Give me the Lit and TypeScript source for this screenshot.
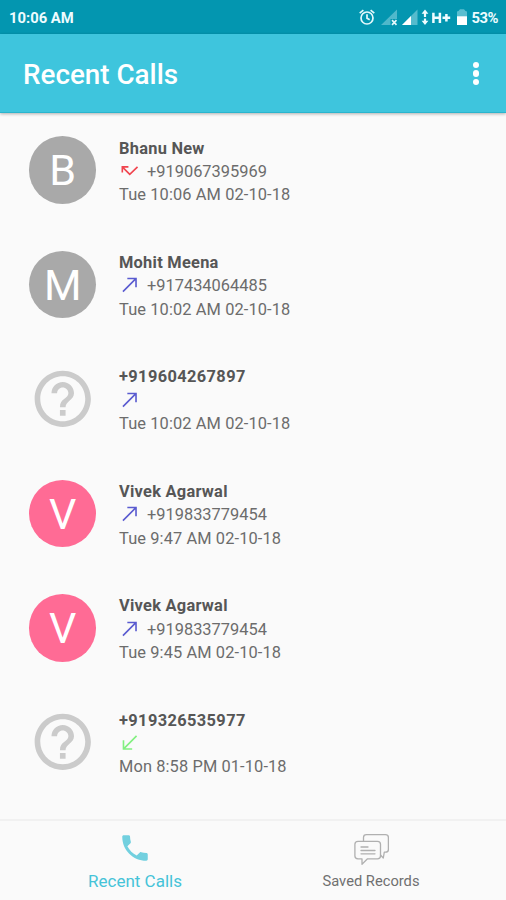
import { LitElement, html, svg, css } from "lit";
import { customElement, property } from "lit/decorators.js";

type Kind = "missed" | "out" | "in";
interface Call {
  initial?: string;
  tone?: string;
  name: string;
  number?: string;
  kind: Kind;
  time: string;
}

const CALLS: Call[] = [
  { initial: "B", tone: "grey", name: "Bhanu New", number: "+919067395969", kind: "missed", time: "Tue 10:06 AM 02-10-18" },
  { initial: "M", tone: "grey", name: "Mohit Meena", number: "+917434064485", kind: "out", time: "Tue 10:02 AM 02-10-18" },
  { name: "+919604267897", kind: "out", time: "Tue 10:02 AM 02-10-18" },
  { initial: "V", tone: "pink", name: "Vivek Agarwal", number: "+919833779454", kind: "out", time: "Tue 9:47 AM 02-10-18" },
  { initial: "V", tone: "pink", name: "Vivek Agarwal", number: "+919833779454", kind: "out", time: "Tue 9:45 AM 02-10-18" },
  { name: "+919326535977", kind: "in", time: "Mon 8:58 PM 01-10-18" },
];

const ARROWS = {
  missed: svg`<path d="M20.7 7.7 12 16 4.2 8.2M3.7 14V7.7H10.5" />`,
  out: svg`<path d="M4.4 19.6 18.8 5.2M9.3 5H19V14.7" />`,
  in: svg`<path d="M19.6 4.4 5.2 18.8M14.7 19H5V9.3" />`,
};

@customElement("status-bar")
class StatusBar extends LitElement {
  static styles = css`
    :host {
      display: flex;
      align-items: center;
      justify-content: space-between;
      height: 34px;
      padding: 2px 8px 0 9px;
      box-sizing: border-box;
      background: #0396b0;
      color: #eefcff;
      font-size: 14.8px;
      font-weight: 700;
    }
    .right { display: flex; align-items: center; }
    svg { display: block; }
    .pct { letter-spacing: -0.45px; }
  `;
  render() {
    return html`
      <span class="clock">10:06 AM</span>
      <div class="right">
        <svg width="112" height="22" viewBox="358 7 112 22" fill="none">
          <g stroke="#e4f8fb" stroke-width="1.7">
            <circle cx="366" cy="18" r="6" />
            <path d="M366 14.3V18.2L368.7 19.8M358.7 13.2 362.4 10.2M373.3 13.2 369.6 10.2" />
          </g>
          <path d="M380 25 396 9.5V19H389.5V25Z" fill="#4fb8cb" />
          <path d="M391 20.2 395.5 24.8M395.5 20.2 391 24.8" stroke="#e4f8fb" stroke-width="1.7" />
          <path d="M401 25 416.5 9.5V25Z" fill="#55bbcd" />
          <path d="M401 25 410 16V25Z" fill="#fff" />
          <path d="M424 9.5 427.4 13.8H425.1V17H422.9V13.8H420.6ZM424 25 420.6 20.7H422.9V18.4H425.1V20.7H427.4Z" fill="#eefcff" />
          <path d="M432.4 12.7V23M438.9 12.7V23M432.4 17.8H438.9M441.5 17.8H449.2M445.4 14V21.6" stroke="#eefcff" stroke-width="2.5" />
          <path d="M456 12Q456 11 457.5 11L459 9.3H463L464.5 11Q466 11 466 12V17H456Z" fill="#5abed0" />
          <path d="M456 16.3H466V25H456Z" fill="#fff" />
        </svg>
        <span class="pct">53%</span>
      </div>
    `;
  }
}

@customElement("app-bar")
class AppBar extends LitElement {
  static styles = css`
    :host {
      display: flex;
      align-items: center;
      justify-content: space-between;
      height: 79px;
      padding: 3px 27px 0 23px;
      box-sizing: border-box;
      background: #3ec5dd;
      border-bottom: 1px solid #2ab5ce;
      box-shadow: 0 1px 3px rgba(0, 0, 0, 0.3);
      color: #fff;
      z-index: 1;
    }
    .title { font-size: 27.8px; font-weight: 500; }
    .menu { display: grid; gap: 2.1px; margin-top: -2px; }
    .dot { width: 6.4px; height: 6.4px; border-radius: 50%; background: #fff; }
  `;
  render() {
    return html`
      <span class="title">Recent Calls</span>
      <div class="menu"><i class="dot"></i><i class="dot"></i><i class="dot"></i></div>
    `;
  }
}

@customElement("call-row")
class CallRow extends LitElement {
  @property({ attribute: false }) call!: Call;
  static styles = css`
    :host {
      display: flex;
      align-items: center;
      height: 114.4px;
      padding-left: 28.5px;
      box-sizing: border-box;
    }
    .avatar {
      display: flex;
      align-items: center;
      justify-content: center;
      width: 67.5px;
      height: 67.5px;
      border-radius: 50%;
      color: #fff;
      font-size: 43px;
      line-height: 67.5px;
      box-sizing: border-box;
      padding: 2px 0 0 1px;
    }
    .grey { background: #a9a9a9; }
    .pink { background: #ff6b95; }
    .help { width: 67.5px; height: 67.5px; fill: #cbcbcb; }
    .info {
      margin: 3px 0 0 23px;
      color: #6c6c6c;
      font-size: 16.4px;
      line-height: 23.4px;
    }
    .name { color: #565656; font-weight: 700; letter-spacing: 0.26px; }
    .name.digits { letter-spacing: 0.38px; }
    .time { letter-spacing: 0.11px; }
    .line { display: flex; align-items: center; gap: 6.5px; height: 23.4px; }
    .arrow { width: 21.5px; height: 21.5px; fill: none; stroke-width: 1.8; margin-top: -2px; }
    .missed { stroke: #f0444e; }
    .out { stroke: #5a5bd0; }
    .in { stroke: #82f080; }
  `;
  render() {
    const c = this.call;
    return html`
      ${c.initial
        ? html`<div class="avatar ${c.tone}">${c.initial}</div>`
        : html`<svg class="help" viewBox="0 0 24 24">
            <path d="M11 18h2v-2h-2v2zm1-16C6.48 2 2 6.48 2 12s4.48 10 10 10 10-4.48 10-10S17.52 2 12 2zm0 18c-4.41 0-8-3.59-8-8s3.59-8 8-8 8 3.59 8 8-3.59 8-8 8zm0-14c-2.21 0-4 1.79-4 4h2c0-1.1.9-2 2-2s2 .9 2 2c0 2-3 1.75-3 5h2c0-2.25 3-2.5 3-5 0-2.21-1.79-4-4-4z" />
          </svg>`}
      <div class="info">
        <div class="name ${c.number ? "" : "digits"}">${c.name}</div>
        <div class="line">
          <svg class="arrow ${c.kind}" viewBox="0 0 24 24">${ARROWS[c.kind]}</svg>
          <span>${c.number ?? ""}</span>
        </div>
        <div class="time">${c.time}</div>
      </div>
    `;
  }
}

@customElement("bottom-nav")
class BottomNav extends LitElement {
  static styles = css`
    :host {
      display: grid;
      grid-template-columns: 236px 236px;
      justify-content: center;
      height: 81px;
      box-sizing: border-box;
      border-top: 2px solid #f1f1f1;
      background: #fafafa;
    }
    .tab {
      display: flex;
      flex-direction: column;
      align-items: center;
      padding-top: 10px;
    }
    svg { display: block; width: 36px; height: 34px; }
    .label { margin-top: 6px; line-height: 20px; white-space: nowrap; }
    .active { color: #45c3d8; font-size: 17px; }
    .idle { color: #707070; font-size: 14.7px; }
    .phone { fill: #72d0df; }
    .chat { fill: none; stroke: #b0b0b0; stroke-width: 1.3; stroke-linejoin: round; stroke-linecap: round; }
  `;
  render() {
    return html`
      <div class="tab active">
        <svg class="phone" viewBox="0 0 24 24">
          <path d="M6.62 10.79c1.44 2.83 3.76 5.14 6.59 6.59l2.2-2.2c.27-.27.67-.36 1.02-.24 1.12.37 2.33.57 3.57.57.55 0 1 .45 1 1V20c0 .55-.45 1-1 1-9.39 0-17-7.61-17-17 0-.55.45-1 1-1h3.5c.55 0 1 .45 1 1 0 1.25.2 2.45.57 3.57.11.35.03.74-.25 1.02l-2.2 2.2z" />
        </svg>
        <span class="label">Recent Calls</span>
      </div>
      <div class="tab idle">
        <svg class="chat" viewBox="353 831 36 34">
          <path d="M363.5 841V837.5Q363.5 834.7 366.5 834.7H385.5Q388.4 834.7 388.4 837.5V849.5Q388.4 852.2 385.5 852.2H384.3L383.3 858 380.5 855" />
          <path d="M358 841.3H377.5Q380.5 841.3 380.5 844.2V856Q380.5 858.8 377.5 858.8H367.5L362 864.3V858.8H358Q354.9 858.8 354.9 856V844.2Q354.9 841.3 358 841.3Z" />
          <path d="M361 847H368M361 850.5H375M361 853.8H375" />
        </svg>
        <span class="label">Saved Records</span>
      </div>
    `;
  }
}

@customElement("app-root")
class AppRoot extends LitElement {
  static styles = css`
    :host {
      display: flex;
      flex-direction: column;
      height: 900px;
      overflow: hidden;
      background: #fafafa;
      font-family: Roboto, sans-serif;
    }
    .list { flex: 1; min-height: 0; overflow: hidden; }
    status-bar, app-bar, bottom-nav { flex: none; }
  `;
  render() {
    return html`
      <status-bar></status-bar>
      <app-bar></app-bar>
      <main class="list">${CALLS.map((c) => html`<call-row .call=${c}></call-row>`)}</main>
      <bottom-nav></bottom-nav>
    `;
  }
}
